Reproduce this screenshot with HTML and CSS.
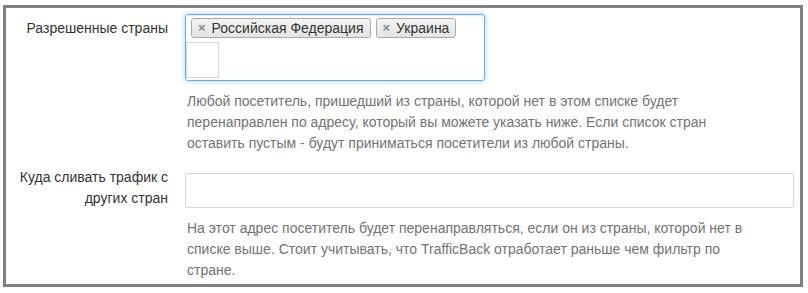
FILE: index.html
```html
<!DOCTYPE html>
<html>
<head>
  <meta charset="UTF-8">
  <title>Настройки потока</title>
  <link rel="stylesheet" href="styles.css">
</head>
<body>

<div class="frame">

  <!-- Разрешенные страны -->
  <div class="row">
    <label class="row-label">Разрешенные страны</label>
    <div class="row-field">
      <div class="select-box">
        <div class="tags">
          <span class="tag"><span class="tag-x">×</span>Российская Федерация</span>
          <span class="tag"><span class="tag-x">×</span>Украина</span>
        </div>
        <div class="search-box"></div>
      </div>
      <p class="help">
        Любой посетитель, пришедший из страны, которой нет в этом списке будет<br>
        перенаправлен по адресу, который вы можете указать ниже. Если список стран<br>
        оставить пустым - будут приниматься посетители из любой страны.
      </p>
    </div>
  </div>

  <!-- TrafficBack -->
  <div class="row row-second">
    <label class="row-label label-up" for="trafficback">Куда сливать трафик с других стран</label>
    <div class="row-field">
      <input type="text" id="trafficback" class="text-input" />
      <p class="help">
        На этот адрес посетитель будет перенаправляться, если он из страны, которой нет в<br>
        списке выше. Стоит учитывать, что TrafficBack отработает раньше чем фильтр по<br>
        стране.
      </p>
    </div>
  </div>

</div>

</body>
</html>
```

FILE: styles.css
```css
/* --- BASE --- */
* {
  margin: 0;
  padding: 0;
  box-sizing: border-box;
}
body {
  background: #fff;
  font-family: 'Liberation Sans', Arial, sans-serif;
  font-size: 14px;
  color: #333;
}

/* --- CADRE --- */
.frame {
  margin: 5px 0 0 3px;
  width: 800px;
  height: 282px;
  border: 3px solid #808080;
  overflow: hidden;
  padding-top: 6px;
}

/* --- LIGNES DU FORMULAIRE --- */
.row {
  display: grid;
  grid-template-columns: 179px 1fr;
}
.row-second {
  margin-top: 19px;
}
.row-label {
  text-align: right;
  padding: 4px 17px 0 4px;
  line-height: 20px;
}
.label-up {
  margin-top: -10px;
  line-height: 21px;
}
.row-field {
  padding-right: 3px;
}

/* --- SELECT MULTIPLE --- */
.select-box {
  width: 300px;
  height: 67px;
  border: 1px solid #66afe9;
  border-radius: 3px;
  box-shadow: inset 0 1px 1px rgba(0,0,0,0.075), 0 0 5px rgba(102,175,233,0.6);
}
.tags {
  display: flex;
  gap: 5px;
  padding: 3px 0 0 5px;
}
.tag {
  display: flex;
  align-items: center;
  height: 20px;
  padding: 0 6px 0 6px;
  border: 1px solid #aaa;
  border-radius: 3px;
  background: linear-gradient(#f4f4f4, #e4e4e4);
  line-height: 18px;
  color: #333;
}
.tag-x {
  color: #888;
  font-size: 13px;
  font-weight: bold;
  margin-right: 6px;
}
.search-box {
  width: 33px;
  height: 36px;
  margin-top: 4px;
  border: 1px solid #d9d9d9;
}

/* --- CHAMP TEXTE --- */
.text-input {
  display: block;
  width: 609px;
  height: 35px;
  border: 1px solid #d4d4d4;
  border-radius: 2px;
  outline: none;
  font: inherit;
}

/* --- AIDE --- */
.help {
  margin-top: 10px;
  padding-left: 2px;
  color: #737373;
  line-height: 21px;
}
```
